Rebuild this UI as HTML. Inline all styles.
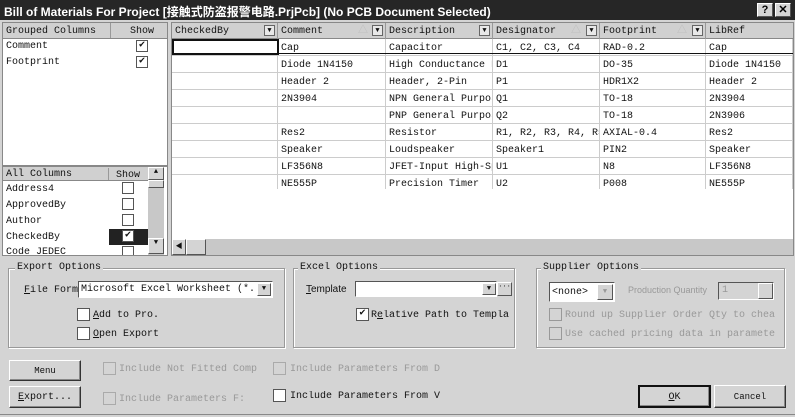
<html><head><style>
*{box-sizing:border-box;margin:0;padding:0}
body{width:795px;height:417px;background:#d4d4d4;font:10px "Liberation Mono","Noto Sans CJK SC",monospace;color:#111;position:relative;overflow:hidden}
.a{position:absolute;white-space:nowrap;overflow:hidden}
.title{left:0;top:0;width:795px;height:20px;background:#262626;color:#fff;font:bold 12px "Liberation Sans","Noto Sans CJK SC",sans-serif;padding:3px 4px}
.tb{top:3px;width:16px;height:14px;background:#d4d4d4;border:1px solid;border-color:#fff #555 #555 #fff;color:#000;font:bold 11px "Liberation Sans",sans-serif;text-align:center;line-height:12px}
.hdr{background:#d0d0d0;border-bottom:1px solid #888;height:16px;line-height:17px;padding-left:3px}
.white{background:#fff}
.cb{width:12px;height:12px;border:1px solid #555;background:#fff;font-size:10px;line-height:10px;text-align:center}
.cell{height:17px;line-height:19px;padding-left:3px;border-right:1px solid #ccc;border-bottom:1px solid #ccc}
.dd{width:11px;height:11px;border:1px solid #666;background:#e8e8e8;font-size:7px;text-align:center;line-height:10px}
.grp{border:1px solid #999;box-shadow:1px 1px 0 #fff inset,1px 1px 0 #fff}
.gl{background:#d4d4d4;padding:0 2px}
.btn{background:#d4d4d4;border:1px solid;border-color:#fff #333 #333 #fff;box-shadow:inset -1px -1px 0 #888;text-align:center}
.dis{color:#999}
.sb{background:#d4d4d4;border:1px solid;border-color:#fff #555 #555 #fff;font-size:7px;text-align:center}
</style></head><body>
<div class="a title">Bill of Materials For Project [接触式防盗报警电路.PrjPcb] (No PCB Document Selected)</div>
<div class="a tb" style="left:757px">?</div><div class="a tb" style="left:775px">✕</div>

<!-- left grouped -->
<div class="a white" style="left:2px;top:22px;width:166px;height:144px;border:1px solid #888"></div>
<div class="a hdr" style="left:3px;top:23px;width:164px">Grouped Columns</div>
<div class="a" style="left:110px;top:23px;width:1px;height:15px;background:#999"></div>
<div class="a" style="left:130px;top:26px">Show</div>
<div class="a" style="left:6px;top:41px">Comment</div><div class="a cb" style="left:136px;top:40px">✔</div>
<div class="a" style="left:6px;top:57px">Footprint</div><div class="a cb" style="left:136px;top:56px">✔</div>

<div class="a white" style="left:2px;top:166px;width:166px;height:90px;border:1px solid #888"></div>
<div class="a hdr" style="left:3px;top:167px;width:145px;height:14px;line-height:15px">All Columns</div>
<div class="a" style="left:108px;top:168px;width:1px;height:12px;background:#999"></div>
<div class="a" style="left:116px;top:170px">Show</div>
<div class="a" style="left:6px;top:184px">Address4</div><div class="a cb" style="left:122px;top:182px"></div>
<div class="a" style="left:6px;top:200px">ApprovedBy</div><div class="a cb" style="left:122px;top:198px"></div>
<div class="a" style="left:6px;top:216px">Author</div><div class="a cb" style="left:122px;top:214px"></div>
<div class="a" style="left:109px;top:229px;width:39px;height:16px;background:#222"></div>
<div class="a" style="left:6px;top:232px">CheckedBy</div><div class="a cb" style="left:122px;top:230px">✔</div>
<div class="a" style="left:6px;top:247px;height:8px">Code JEDEC</div><div class="a cb" style="left:122px;top:246px;height:9px;border-bottom:none"></div>
<div class="a" style="left:148px;top:167px;width:16px;height:88px;background:#c8c8c8"></div>
<div class="a sb" style="left:148px;top:180px;width:16px;height:8px"></div>
<div class="a sb" style="left:148px;top:167px;width:16px;height:13px">▲</div>
<div class="a sb" style="left:148px;top:238px;width:16px;height:16px">▼</div>

<!-- grid -->
<div class="a white" style="left:171px;top:22px;width:623px;height:234px;border:1px solid #888"></div>
<div class="a hdr" style="left:172px;top:23px;width:621px;padding:0"></div>
<div class="a" style="left:172px;top:23px;width:621px;height:16px;line-height:17px">
 <div class="a" style="left:0;width:106px;height:16px;padding-left:3px;border-right:1px solid #999">CheckedBy<div class="a dd" style="left:92px;top:2px">▼</div></div>
 <div class="a" style="left:106px;width:108px;height:16px;padding-left:3px;border-right:1px solid #999">Comment<div class="a" style="left:80px;top:0;color:#bbb">△</div><div class="a dd" style="left:94px;top:2px">▼</div></div>
 <div class="a" style="left:214px;width:107px;height:16px;padding-left:3px;border-right:1px solid #999">Description<div class="a dd" style="left:93px;top:2px">▼</div></div>
 <div class="a" style="left:321px;width:107px;height:16px;padding-left:3px;border-right:1px solid #999">Designator<div class="a" style="left:78px;top:0;color:#bbb">△</div><div class="a dd" style="left:93px;top:2px">▼</div></div>
 <div class="a" style="left:428px;width:106px;height:16px;padding-left:3px;border-right:1px solid #999">Footprint<div class="a" style="left:77px;top:0;color:#bbb">△</div><div class="a dd" style="left:92px;top:2px">▼</div></div>
 <div class="a" style="left:534px;width:87px;height:16px;padding-left:3px">LibRef</div>
</div>
<div id="rows" class="a" style="left:172px;top:39px;width:621px;height:150px"></div>
<div class="a" style="left:172px;top:39px;width:107px;height:16px;border:2px solid #111"></div>
<div class="a" style="left:279px;top:53px;width:514px;height:1px;background:#111"></div>
<div class="a" style="left:172px;top:239px;width:621px;height:16px;background:#c8c8c8"></div>
<div class="a sb" style="left:172px;top:239px;width:14px;height:16px;line-height:14px">◀</div>
<div class="a sb" style="left:186px;top:239px;width:20px;height:16px"></div>

<!-- Export options -->
<div class="a grp" style="left:8px;top:268px;width:277px;height:80px"></div>
<div class="a gl" style="left:15px;top:262px">Export Options</div>
<div class="a" style="left:24px;top:285px"><u>F</u>ile Form</div>
<div class="a white" style="left:78px;top:281px;width:195px;height:17px;border:1px solid;border-color:#555 #fff #fff #555;line-height:16px;padding-left:2px">Microsoft Excel Worksheet (*.:</div>
<div class="a sb" style="left:257px;top:283px;width:14px;height:13px;line-height:11px">▼</div>
<div class="a cb" style="left:77px;top:308px;width:13px;height:13px"></div><div class="a" style="left:93px;top:310px"><u>A</u>dd to Pro.</div>
<div class="a cb" style="left:77px;top:327px;width:13px;height:13px"></div><div class="a" style="left:93px;top:329px"><u>O</u>pen Export</div>

<div class="a grp" style="left:293px;top:268px;width:222px;height:80px"></div>
<div class="a gl" style="left:298px;top:262px">Excel Options</div>
<div class="a" style="left:306px;top:284px;font:10px 'Liberation Sans',sans-serif"><u>T</u>emplate</div>
<div class="a white" style="left:355px;top:281px;width:142px;height:16px;border:1px solid;border-color:#555 #fff #fff #555"></div>
<div class="a sb" style="left:482px;top:283px;width:14px;height:12px;line-height:10px">▼</div>
<div class="a sb" style="left:497px;top:282px;width:15px;height:14px;line-height:8px">···</div>
<div class="a cb" style="left:356px;top:308px;width:13px;height:13px">✔</div><div class="a" style="left:371px;top:310px">R<u>e</u>lative Path to Templa</div>

<div class="a grp" style="left:536px;top:268px;width:249px;height:80px"></div>
<div class="a gl" style="left:541px;top:262px">Supplier Options</div>
<div class="a white" style="left:549px;top:282px;width:66px;height:20px;border:1px solid;border-color:#555 #fff #fff #555;line-height:19px;padding-left:2px">&lt;none&gt;</div>
<div class="a sb" style="left:597px;top:284px;width:16px;height:16px;color:#999;line-height:14px">▼</div>
<div class="a dis" style="left:628px;top:285px;font:9px 'Liberation Sans',sans-serif">Production Quantity</div>
<div class="a" style="left:718px;top:282px;width:56px;height:18px;border:1px solid;border-color:#555 #fff #fff #555;color:#999;padding-left:3px;line-height:16px">1</div>
<div class="a sb" style="left:758px;top:283px;width:15px;height:16px"></div>
<div class="a cb" style="left:549px;top:308px;width:13px;height:13px;background:#d4d4d4;border-color:#999"></div><div class="a dis" style="left:565px;top:310px">Round up Supplier Order Qty to chea</div>
<div class="a cb" style="left:549px;top:327px;width:13px;height:13px;background:#d4d4d4;border-color:#999"></div><div class="a dis" style="left:565px;top:329px">Use cached pricing data in paramete</div>

<!-- bottom -->
<div class="a btn" style="left:9px;top:360px;width:72px;height:21px;line-height:20px;font-size:9px">Menu</div>
<div class="a btn" style="left:9px;top:386px;width:72px;height:22px;line-height:21px"><u>E</u>xport...</div>
<div class="a cb" style="left:103px;top:362px;width:13px;height:13px;background:#d4d4d4;border-color:#aaa"></div><div class="a dis" style="left:119px;top:364px">Include Not Fitted Comp</div>
<div class="a cb" style="left:103px;top:392px;width:13px;height:13px;background:#d4d4d4;border-color:#aaa"></div><div class="a dis" style="left:119px;top:394px">Include Parameters F:</div>
<div class="a cb" style="left:273px;top:362px;width:13px;height:13px;background:#d4d4d4;border-color:#aaa"></div><div class="a dis" style="left:290px;top:364px">Include Parameters From D</div>
<div class="a cb" style="left:273px;top:389px;width:13px;height:13px"></div><div class="a" style="left:290px;top:391px">Include Parameters From V</div>
<div class="a btn" style="left:638px;top:385px;width:73px;height:23px;line-height:21px;border:2px solid #111"><u>O</u>K</div>
<div class="a btn" style="left:714px;top:385px;width:72px;height:23px;line-height:22px;font-size:9px">Cancel</div>
<div class="a" style="left:0;top:414px;width:795px;height:1px;background:#888"></div>

<script>
var d=[["","Cap","Capacitor","C1, C2, C3, C4","RAD-0.2","Cap"],["","Diode 1N4150","High Conductance Fast","D1","DO-35","Diode 1N4150"],["","Header 2","Header, 2-Pin","P1","HDR1X2","Header 2"],["","2N3904","NPN General Purpose","Q1","TO-18","2N3904"],["","","PNP General Purpose","Q2","TO-18","2N3906"],["","Res2","Resistor","R1, R2, R3, R4, R5","AXIAL-0.4","Res2"],["","Speaker","Loudspeaker","Speaker1","PIN2","Speaker"],["","LF356N8","JFET-Input High-Speed","U1","N8","LF356N8"],["","NE555P","Precision Timer","U2","P008","NE555P"]];
var x=[0,106,214,321,428,534,621],h="";
d.forEach(function(r,i){r.forEach(function(c,j){h+='<div class="a cell" style="left:'+x[j]+'px;top:'+(i*17)+'px;width:'+(x[j+1]-x[j])+'px">'+c+'</div>'})});
document.getElementById("rows").innerHTML=h;
</script>
</body></html>
